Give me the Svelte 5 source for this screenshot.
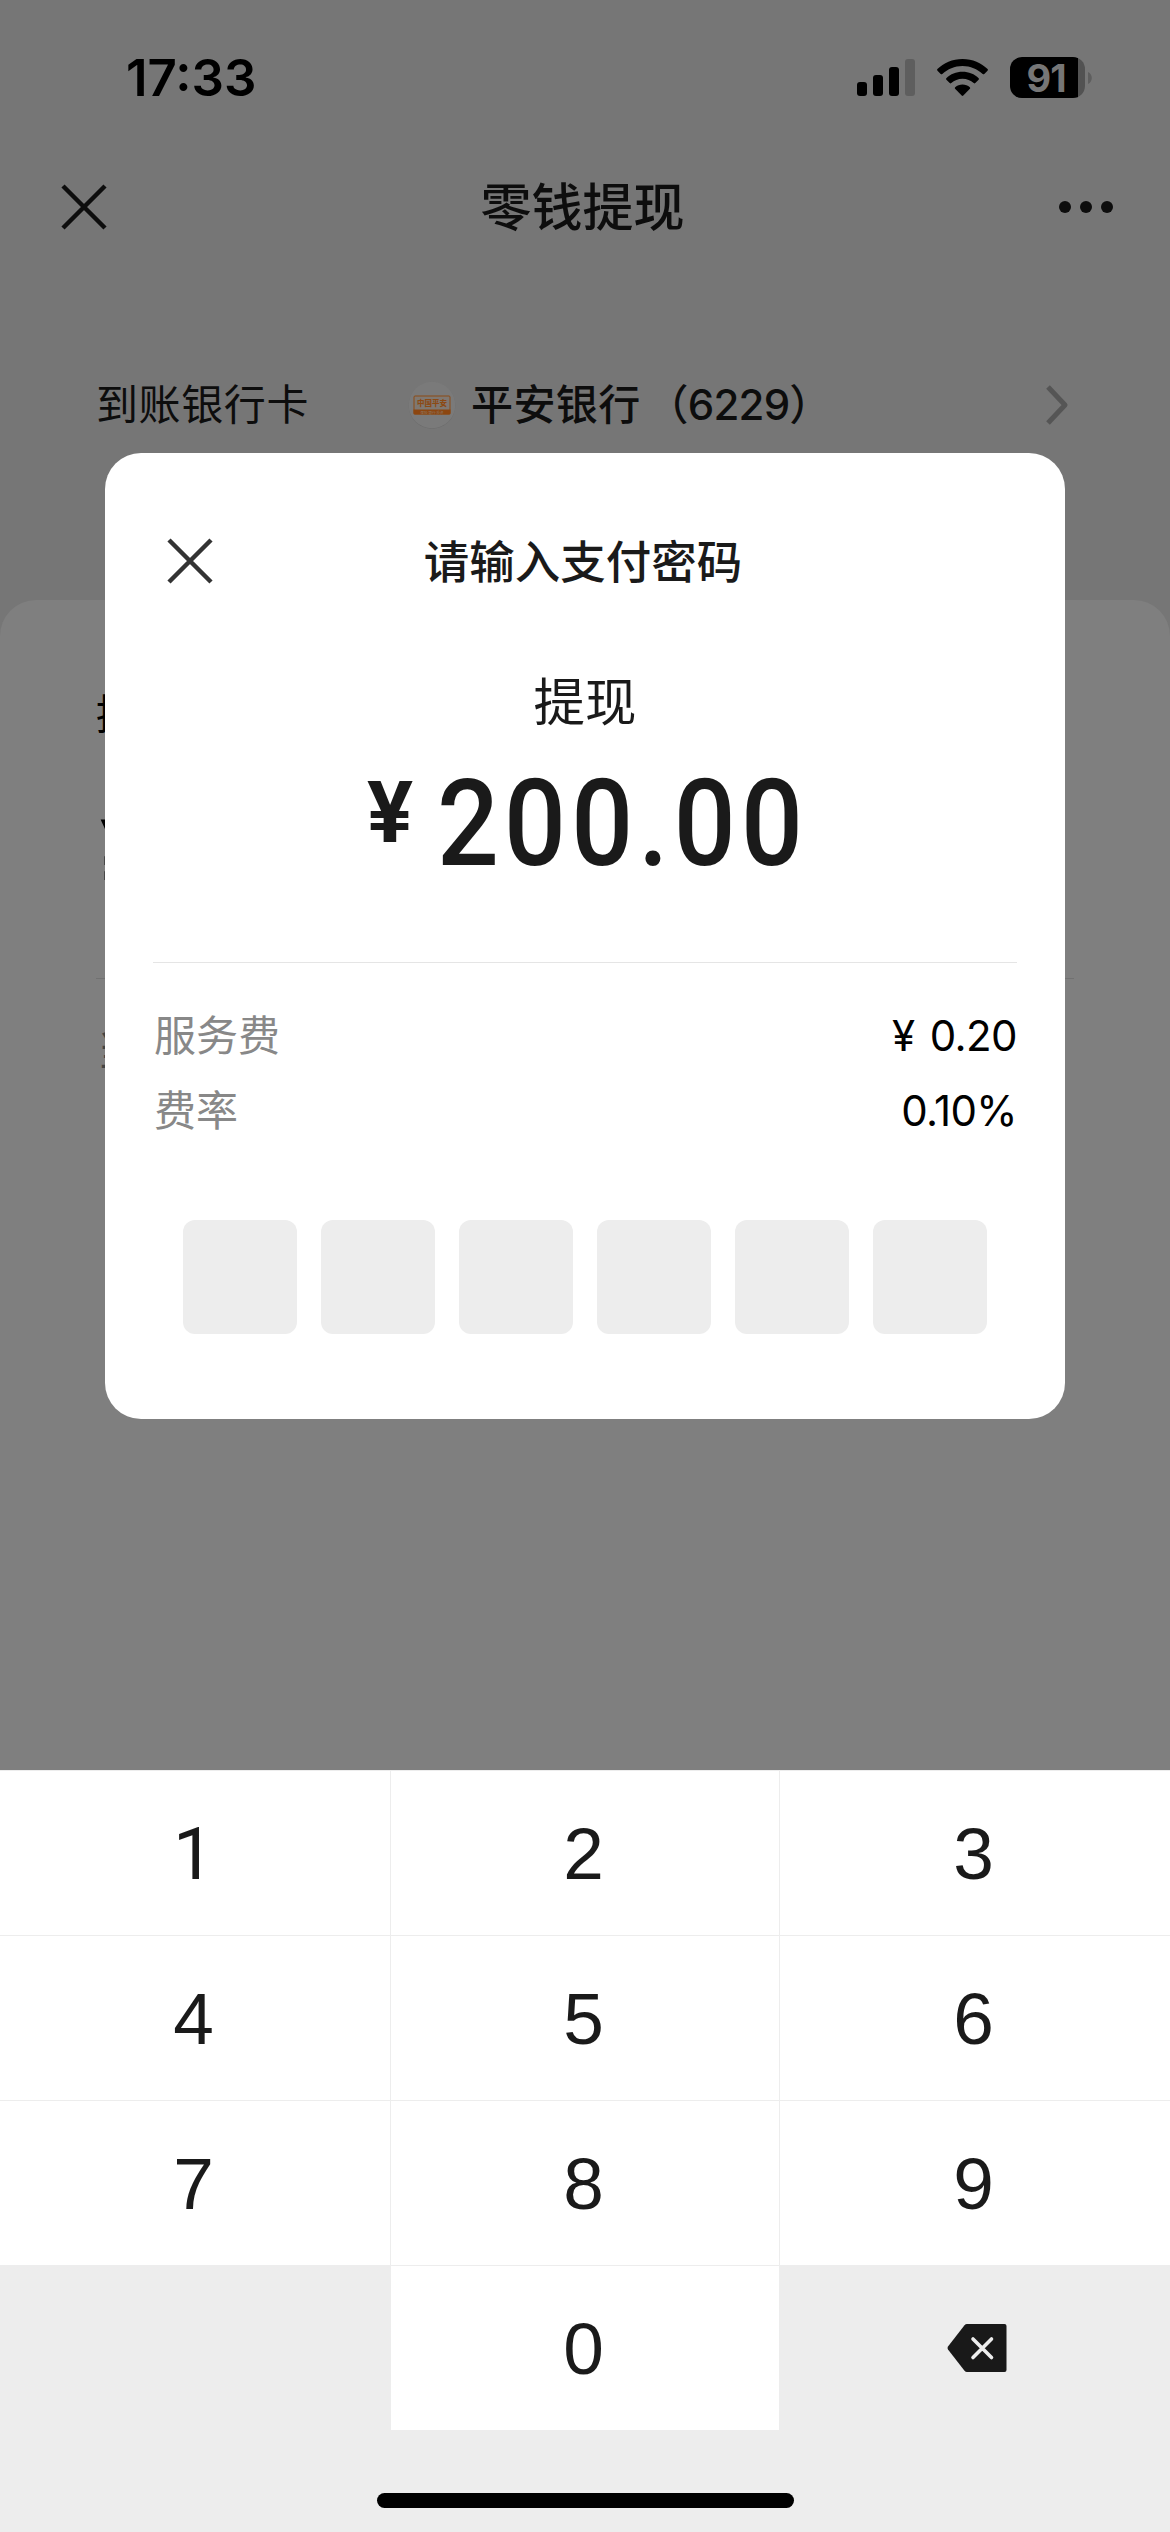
<script>
  const account = { bank: '平安银行', tail: '6229' };
  const order = { title: '提现', amount: '200.00' };
  const fees = [
    { label: '服务费', value: '¥ 0.20' },
    { label: '费率', value: '0.10%' }
  ];
  const keys = ['1', '2', '3', '4', '5', '6', '7', '8', '9'];
  const maxLength = 6;

  let password = '';

  function press(key) {
    if (password.length < maxLength) {
      password += key;
    }
  }

  function backspace() {
    password = password.slice(0, -1);
  }
</script>

<div class="screen">
  <div class="page">
    <div class="status-bar">
      <span class="time">17:33</span>
      <div class="status-icons">
        <svg class="signal" width="58" height="38" viewBox="0 0 58 38">
          <rect x="0" y="23" width="10" height="14" rx="3" />
          <rect x="16" y="16" width="10" height="21" rx="3" />
          <rect x="32" y="8" width="10" height="29" rx="3" />
          <rect x="48" y="0" width="10" height="37" rx="3" fill="#5e5e5e" />
        </svg>
        <svg class="wifi" width="51" height="38" viewBox="0 0 51 38">
          <path d="M25.500 0C35.600 0 44.400 4 50.600 10.100Q51.200 10.900 50.500 11.700L47.300 15Q46.500 15.700 45.700 15C40.300 10 33.400 7 25.500 7S10.700 10 5.300 15Q4.500 15.700 3.700 15L.5 11.700Q-.2 10.900 .4 10.100C6.600 4 15.400 0 25.500 0Z" />
          <path d="M25.500 12.800C31.800 12.800 37.500 15.200 41.700 19.200Q42.300 20 41.600 20.800L38.300 24.100Q37.500 24.800 36.700 24.100C33.700 21.400 29.900 19.800 25.500 19.800S17.300 21.400 14.300 24.100Q13.500 24.800 12.700 24.100L9.400 20.800Q8.700 20 9.300 19.200C13.500 15.200 19.200 12.800 25.500 12.800Z" />
          <path d="M25.500 25.600C28.300 25.600 30.900 26.600 32.800 28.200Q33.600 29 32.900 29.800L26.300 36.600Q25.500 37.300 24.700 36.600L18.100 29.800Q17.400 29 18.200 28.200C20.100 26.600 22.700 25.600 25.500 25.600Z" />
        </svg>
        <div class="battery">
          <div class="cell"><span>91</span></div>
          <svg width="4" height="12" viewBox="0 0 4 12"><path d="M0 0C5 2 5 10 0 12Z" fill="#5e5e5e" /></svg>
        </div>
      </div>
    </div>

    <div class="nav">
      <svg width="46" height="46" viewBox="0 0 46 46"><path d="M2 2L44 44M44 2L2 44" /></svg>
      <h1>零钱提现</h1>
      <svg class="more" width="56" height="14" viewBox="0 0 56 14">
        <circle cx="7" cy="7" r="6" />
        <circle cx="28" cy="7" r="6" />
        <circle cx="49" cy="7" r="6" />
      </svg>
    </div>

    <div class="bank-row">
      <span class="bank-label">到账银行卡</span>
      <svg class="bank-logo" width="48" height="48" viewBox="0 0 48 48">
        <circle cx="24" cy="24.500" r="23.300" fill="#6c6c6c" />
        <circle cx="24" cy="24" r="23.300" fill="#7a7a7a" />
        <rect x="6" y="15" width="36" height="18" rx="1" fill="#7f7872" stroke="#8c4a15" />
        <path d="M5.500 28.500h37v4a1 1 0 0 1-1 1h-35a1 1 0 0 1-1-1z" fill="#8c4610" />
        <text x="24" y="24.800" class="logo-name">中国平安</text>
        <text x="24" y="32.600" class="logo-sub">保险·银行·投资</text>
      </svg>
      <span class="bank-name">{account.bank}<span class="tail">（{account.tail}）</span></span>
      <svg class="chevron" width="24" height="42" viewBox="0 0 24 42"><path d="M3 3L20 21L3 39" /></svg>
    </div>

    <div class="sheet">
      <div class="sheet-title">提现金额</div>
      <div class="sheet-input">¥</div>
      <div class="sheet-balance">当</div>
    </div>
  </div>

  <div class="modal">
    <div class="modal-head">
      <svg width="46" height="46" viewBox="0 0 46 46"><path d="M2 2L44 44M44 2L2 44" /></svg>
      <h2>请输入支付密码</h2>
    </div>
    <div class="order-title">{order.title}</div>
    <div class="amount">
      <span class="yen">¥</span>
      <span class="value">{order.amount}</span>
    </div>
    <div class="fees">
      {#each fees as fee}
        <div class="fee">
          <span class="fee-label">{fee.label}</span>
          <span class="fee-value">{fee.value}</span>
        </div>
      {/each}
    </div>
    <div class="boxes">
      {#each Array(maxLength) as _, i}
        <div class="box" class:filled={i < password.length}></div>
      {/each}
    </div>
  </div>

  <div class="keyboard">
    <div class="keys">
      {#each keys as key}
        <button class="key" class:one={key === '1'} on:click={() => press(key)}>{key}</button>
      {/each}
      <div class="blank"></div>
      <button class="key" on:click={() => press('0')}>0</button>
      <button class="delete" aria-label="删除" on:click={backspace}>
        <svg width="60" height="48" viewBox="0 0 60 48">
          <path d="M20 0H57.500Q59.500 0 59.500 2V46Q59.500 48 57.500 48H20Q18.500 48 17.500 46.800L1 25.500Q0 24 1 22.500L17.500 1.200Q18.500 0 20 0Z" fill="#191919" />
          <path d="M26 15L44.500 33.500M44.500 15L26 33.500" stroke="#ededed" stroke-width="3.600" stroke-linecap="round" />
        </svg>
      </button>
    </div>
    <div class="home-bar"></div>
  </div>
</div>

<style>
  :global(body) {
    margin: 0;
    background: #767676;
  }

  .screen {
    position: relative;
    display: flex;
    flex-direction: column;
    width: 1170px;
    height: 2532px;
    overflow: hidden;
    font-family: Inter, "Noto Sans CJK SC", sans-serif;
    color: #0d0d0d;
  }

  .page {
    display: flex;
    flex-direction: column;
    height: 1770px;
    background: #767676;
  }

  .status-bar {
    display: flex;
    align-items: center;
    justify-content: space-between;
    height: 155px;
    padding: 0 78px 0 126px;
    box-sizing: border-box;
    color: #000;
  }

  .time {
    font-size: 51px;
    font-weight: 600;
  }

  .status-icons {
    display: flex;
    align-items: center;
  }

  .signal {
    margin-right: 22px;
  }

  .wifi {
    margin-right: 22px;
  }

  .battery {
    display: flex;
    align-items: center;
    gap: 3px;
  }

  .cell {
    display: flex;
    align-items: center;
    justify-content: center;
    width: 75px;
    height: 41px;
    border-radius: 12px;
    background: linear-gradient(to right, #000 68px, #525252 68px);
    color: #767676;
    font-size: 38px;
    font-weight: 700;
    letter-spacing: -1px;
  }

  .cell span {
    margin-right: 3px;
  }

  .nav {
    display: flex;
    align-items: center;
    justify-content: space-between;
    height: 104px;
    padding: 0 56px 0 61px;
  }

  .nav path {
    fill: none;
    stroke: #0d0d0d;
    stroke-width: 4.5;
  }

  .more {
    fill: #0d0d0d;
  }

  h1 {
    margin: 2px 0 0;
    font-size: 51px;
    font-weight: 500;
    line-height: 60px;
  }

  .bank-row {
    display: flex;
    align-items: center;
    height: 60px;
    padding: 0 101px 0 96px;
    margin-top: 116px;
  }

  .bank-label {
    width: 312px;
    margin-top: -7px;
    font-size: 42px;
    letter-spacing: 0.6px;
  }

  .bank-name {
    margin: -7px 0 0 15px;
    font-size: 42px;
    font-weight: 500;
    letter-spacing: 0.4px;
  }

  .tail {
    margin-left: 6px;
    letter-spacing: -0.8px;
  }

  .logo-name {
    fill: #8c4a15;
    font-size: 7.5px;
    font-weight: 900;
    text-anchor: middle;
  }

  .logo-sub {
    fill: #8b7a6c;
    font-size: 3.5px;
    text-anchor: middle;
  }

  .chevron {
    margin-left: auto;
    fill: none;
    stroke: #555;
    stroke-width: 5;
    stroke-linejoin: round;
  }

  .sheet {
    flex: 1;
    margin-top: 165px;
    padding: 85px 96px 0;
    border-radius: 36px 36px 0 0;
    background: #7f7f7f;
    color: #000;
  }

  .sheet-title {
    font-size: 42px;
    line-height: 60px;
  }

  .sheet-input {
    height: 172px;
    padding: 61px 0 0 4px;
    border-bottom: 1px solid #717171;
    font-family: Roboto, sans-serif;
    font-size: 106px;
    font-weight: 700;
    line-height: 106px;
  }

  .sheet-balance {
    margin-top: 42px;
    padding-left: 1px;
    color: #444;
    font-size: 42px;
    line-height: 60px;
  }

  .modal {
    position: absolute;
    top: 453px;
    left: 105px;
    width: 960px;
    height: 966px;
    border-radius: 36px;
    background: #fff;
    color: #1a1a1a;
  }

  .modal-head {
    display: grid;
    grid-template-columns: 46px 1fr 46px;
    align-items: center;
    height: 60px;
    margin-top: 78px;
    padding: 0 66px 0 62px;
  }

  .modal-head svg {
    margin-top: -2px;
  }

  .modal-head path {
    stroke: #333;
    stroke-width: 4.5;
  }

  h2 {
    margin: 2px 0 0;
    font-size: 45.5px;
    font-weight: 500;
    line-height: 60px;
    text-align: center;
  }

  .order-title {
    margin-top: 76px;
    font-size: 51.5px;
    line-height: 70px;
    text-align: center;
  }

  .amount {
    display: flex;
    align-items: flex-start;
    height: 210px;
    margin: 0 48px;
    padding: 15px 0 0 214px;
    border-bottom: 1px solid #e5e5e5;
    font-family: Roboto, sans-serif;
  }

  .yen {
    margin-right: 24px;
    font-size: 86px;
    font-weight: 700;
    line-height: 122px;
  }

  .value {
    font-size: 121px;
    font-weight: 500;
    line-height: 144px;
    letter-spacing: 5.8px;
    transform: scaleX(0.9);
    transform-origin: left;
  }

  .fees {
    padding: 35px 48px 0;
  }

  .fee {
    display: flex;
    justify-content: space-between;
    font-size: 42px;
    line-height: 75px;
  }

  .fee-label {
    padding-left: 1px;
    color: #888;
  }

  .fee-value {
    color: #000;
    letter-spacing: -0.6px;
    word-spacing: 4px;
  }

  .boxes {
    display: flex;
    justify-content: center;
    gap: 24px;
    margin-top: 72px;
  }

  .box {
    display: flex;
    align-items: center;
    justify-content: center;
    width: 114px;
    height: 114px;
    border-radius: 12px;
    background: #ededed;
  }

  .box.filled::after {
    content: '';
    width: 30px;
    height: 30px;
    border-radius: 50%;
    background: #1a1a1a;
  }

  .keyboard {
    display: flex;
    flex-direction: column;
    align-items: center;
    height: 762px;
    background: #ededed;
  }

  .keys {
    display: grid;
    grid-template-columns: 390px 388px 390px;
    grid-auto-rows: 164px;
    gap: 1px;
    padding-top: 1px;
  }

  .key,
  .delete {
    display: flex;
    align-items: center;
    justify-content: center;
    padding: 2px 3px 0 0;
    border: none;
    background: #fff;
    color: #1a1a1a;
    font-family: "Liberation Sans", Arial, sans-serif;
    font-size: 73px;
    line-height: 84px;
  }

  .key.one {
    font-family: Roboto, sans-serif;
  }

  .delete {
    padding: 0 0 0 3px;
    background: none;
  }

  .home-bar {
    width: 417px;
    height: 15px;
    margin-top: 63px;
    border-radius: 8px;
    background: #000;
  }
</style>
